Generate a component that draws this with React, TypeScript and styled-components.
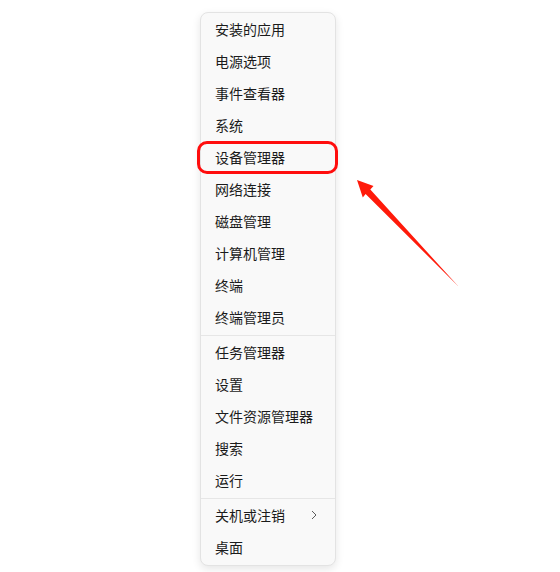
import React from "react";
import styled, { createGlobalStyle } from "styled-components";

const GlobalStyle = createGlobalStyle`
  html, body {
    margin: 0;
    padding: 0;
    background: #ffffff;
  }
  body {
    font-family: "Microsoft YaHei UI", "Noto Sans CJK SC", "Noto Sans", sans-serif;
  }
`;

const groups = [
  ["安装的应用", "电源选项", "事件查看器", "系统", "设备管理器", "网络连接", "磁盘管理", "计算机管理", "终端", "终端管理员"],
  ["任务管理器", "设置", "文件资源管理器", "搜索", "运行"],
  ["关机或注销", "桌面"],
];

const highlighted = "设备管理器";
const withSubmenu = "关机或注销";

export default function App() {
  return (
    <Page>
      <GlobalStyle />
      <Menu>
        {groups.map((group, gi) => (
          <React.Fragment key={gi}>
            {gi > 0 && <Separator />}
            {group.map((label) => (
              <Item key={label} $marked={label === highlighted}>
                <Label>{label}</Label>
                {label === withSubmenu && (
                  <Chevron viewBox="0 0 6 10" width="6" height="10">
                    <path d="M1 1 L5 5 L1 9" fill="none" stroke="#5c5c5c" strokeWidth="1" />
                  </Chevron>
                )}
              </Item>
            ))}
          </React.Fragment>
        ))}
      </Menu>
      <Arrow viewBox="0 0 560 572" width="560" height="572">
        <polygon
          points="357,180 373.5,186 370.3,189.6 458.5,286.5 365.6,193.9 362.8,197.5"
          fill="#ff1a0a"
        />
      </Arrow>
    </Page>
  );
}

const Page = styled.div`
  position: relative;
  width: 560px;
  height: 572px;
  box-sizing: border-box;
  padding: 12px 0 0 200px;
  overflow: hidden;
`;

const Menu = styled.div`
  width: 136px;
  box-sizing: border-box;
  padding: 1px 0;
  background: #f9f9f9;
  border: 1px solid #e3e3e3;
  border-radius: 8px;
  box-shadow: 0 3px 8px rgba(0, 0, 0, 0.1);
  display: flex;
  flex-direction: column;
`;

const Item = styled.div<{ $marked?: boolean }>`
  position: relative;
  height: 32px;
  box-sizing: border-box;
  display: flex;
  align-items: center;
  justify-content: space-between;
  padding: 0 18px 2px 14px;
  color: #1b1b1b;
  font-size: 14px;

  ${(p) =>
    p.$marked &&
    `
    &::after {
      content: "";
      position: absolute;
      left: -4px;
      right: -3px;
      top: -1px;
      bottom: 0;
      border: 3px solid #ff0d0d;
      border-radius: 10px;
      pointer-events: none;
    }
  `}
`;

const Label = styled.span`
  line-height: 30px;
  white-space: nowrap;
`;

const Chevron = styled.svg`
  display: block;
`;

const Separator = styled.div`
  height: 1px;
  margin: 1px 0;
  background: #e6e6e6;
`;

const Arrow = styled.svg`
  position: absolute;
  left: 0;
  top: 0;
  pointer-events: none;
`;
